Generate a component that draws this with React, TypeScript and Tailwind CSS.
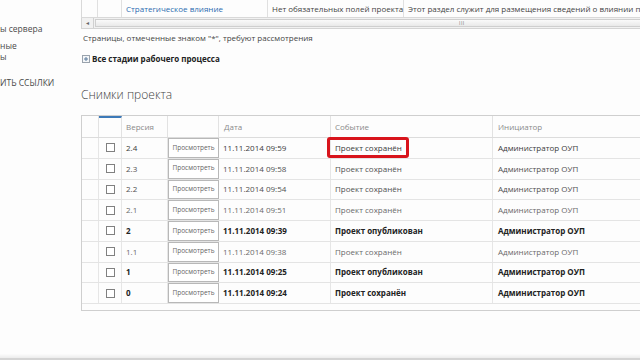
import React from 'react';

type Snap = { v: string; date: string; event: string; bold?: boolean; tone?: string };

const snaps: Snap[] = [
  { v: '2.4', date: '11.11.2014 09:59', event: 'Проект сохранён', tone: 'text-[#3a3a3a]' },
  { v: '2.3', date: '11.11.2014 09:58', event: 'Проект сохранён' },
  { v: '2.2', date: '11.11.2014 09:54', event: 'Проект сохранён' },
  { v: '2.1', date: '11.11.2014 09:51', event: 'Проект сохранён', tone: 'text-[#6a6a6a]' },
  { v: '2', date: '11.11.2014 09:39', event: 'Проект опубликован', bold: true },
  { v: '1.1', date: '11.11.2014 09:38', event: 'Проект сохранён', tone: 'text-[#6a6a6a]' },
  { v: '1', date: '11.11.2014 09:25', event: 'Проект опубликован', bold: true },
  { v: '0', date: '11.11.2014 09:24', event: 'Проект сохранён', bold: true },
];

const cols = 'grid grid-cols-[17px_23px_46px_51px_112px_162px_220px]';

function PlusBox() {
  return (
    <svg width="8" height="8" viewBox="0 0 8 8" className="shrink-0">
      <rect x="0.5" y="0.5" width="7" height="7" fill="#f4f6f8" stroke="#9aa3ad" />
      <path d="M2 4h4M4 2v4" stroke="#5b7a9c" strokeWidth="1" />
    </svg>
  );
}

function SnapshotTable() {
  return (
    <div className="w-[580px] border-t border-l border-b border-[#cfcfcf] pb-[6px]">
      <div className={`${cols} h-[22px] border-b border-[#dcdcdc] text-[8px] text-[#8a8a8a] items-stretch`}>
        <div className="border-r border-[#e2e2e2]" />
        <div className="border-r border-[#e2e2e2] border-t-[2px] border-t-[#3d7ab8]" />
        <div className="border-r border-[#e2e2e2] pl-[4px] flex items-center">Версия</div>
        <div className="border-r border-[#e2e2e2]" />
        <div className="border-r border-[#e2e2e2] pl-[5px] flex items-center">Дата</div>
        <div className="border-r border-[#e2e2e2] pl-[4px] flex items-center">Событие</div>
        <div className="pl-[5px] flex items-center">Инициатор</div>
      </div>
      {snaps.map((s, i) => {
        const txt = s.bold ? 'font-bold text-[#222]' : s.tone ?? 'text-[#505050]';
        return (
          <div
            key={s.v}
            className={`${cols} h-[20.75px] border-b border-[#e4e4e4] text-[8px] items-stretch ${txt}`}
          >
            <div className="border-r border-[#e6e6e6]" />
            <div className="border-r border-[#e6e6e6] flex items-center justify-center">
              <span className="w-[9px] h-[9px] border border-[#808080] bg-white" />
            </div>
            <div className="border-r border-[#e6e6e6] pl-[4px] flex items-center">{s.v}</div>
            <div className="flex items-stretch">
              <button className="flex-1 border border-[#b8b8b8] bg-white text-[6.5px] font-normal text-[#666] leading-none">
                Просмотреть
              </button>
            </div>
            <div className="border-r border-[#e6e6e6] pl-[4px] flex items-center">{s.date}</div>
            <div className="relative border-r border-[#e6e6e6] pl-[4px] flex items-center">
              {s.event}
              {i === 0 && (
                <span className="absolute left-[-4px] top-[-1px] w-[82px] h-[21px] border-[3px] border-[#d8141c] rounded-[3px]" />
              )}
            </div>
            <div className="pl-[5px] flex items-center">Администратор ОУП</div>
          </div>
        );
      })}
    </div>
  );
}

export default function App() {
  return (
    <div
      className="w-[640px] h-[360px] overflow-hidden bg-[#fdfdfd] flex flex-col"
      style={{ fontFamily: '"Open Sans", "Noto Sans", sans-serif' }}
    >
      <div className="flex flex-1 min-h-0">
        <nav className="w-[81px] shrink-0 text-[8.5px] text-[#4a4a4a] leading-[11px] pt-[23px]">
          <div>ы сервера</div>
          <div className="mt-[6px]">ные</div>
          <div>ы</div>
          <div className="mt-[15px]">ИТЬ ССЫЛКИ</div>
        </nav>

        <main className="flex-1 min-w-0 overflow-hidden">
          {/* top grid, scrolled sideways */}
          <div className="w-[600px]">
            <div className="grid grid-cols-[16px_24px_146px_136px_278px] h-[18px] border-b border-l border-[#d9d9d9] text-[8px] items-stretch whitespace-nowrap">
              <div className="border-r border-[#e0e0e0]" />
              <div className="border-r border-[#e0e0e0]" />
              <div className="border-r border-[#e0e0e0] pl-[4px] flex items-center text-[#2b6cb0]">
                Стратегическое влияние
              </div>
              <div className="border-r border-[#e0e0e0] pl-[4px] flex items-center text-[#444]">
                Нет обязательных полей проекта
              </div>
              <div className="pl-[4px] flex items-center text-[#444] overflow-hidden">
                Этот раздел служит для размещения сведений о влиянии пр
              </div>
            </div>
            <div className="flex h-[11px] border border-t-0 border-[#d4d4d4] bg-[#f1f1f1]">
              <div className="w-[12px] border-r border-[#d0d0d0] flex items-center justify-center text-[6px] text-[#666]">
                ◂
              </div>
              <div className="flex-1 m-[1px] border border-[#cfcfcf] bg-gradient-to-b from-[#fafafa] to-[#e9e9e9] flex items-center pl-[363px]">
                <span className="text-[5px] tracking-[0.5px] text-[#777] leading-none">III</span>
              </div>
            </div>
          </div>

          <div className="mt-[3px] pl-[2px] text-[8px] leading-[12px] text-[#444]">
            Страницы, отмеченные знаком "*", требуют рассмотрения
          </div>

          <div className="mt-[9px] pl-[1px] flex items-center gap-[2px] h-[12px] text-[8px] font-bold text-[#222]">
            <PlusBox />
            Все стадии рабочего процесса
          </div>

          <h2 className="mt-[21px] h-[18px] text-[12px] leading-[18px] font-light text-[#444]">Снимки проекта</h2>

          <div className="mt-[11px]">
            <SnapshotTable />
          </div>
        </main>
      </div>
      <div className="h-[4px] bg-gradient-to-b from-[#fcfcfc] to-[#ececec]" />
      <div className="h-[2px] bg-[#d4d4d4]" />
    </div>
  );
}
